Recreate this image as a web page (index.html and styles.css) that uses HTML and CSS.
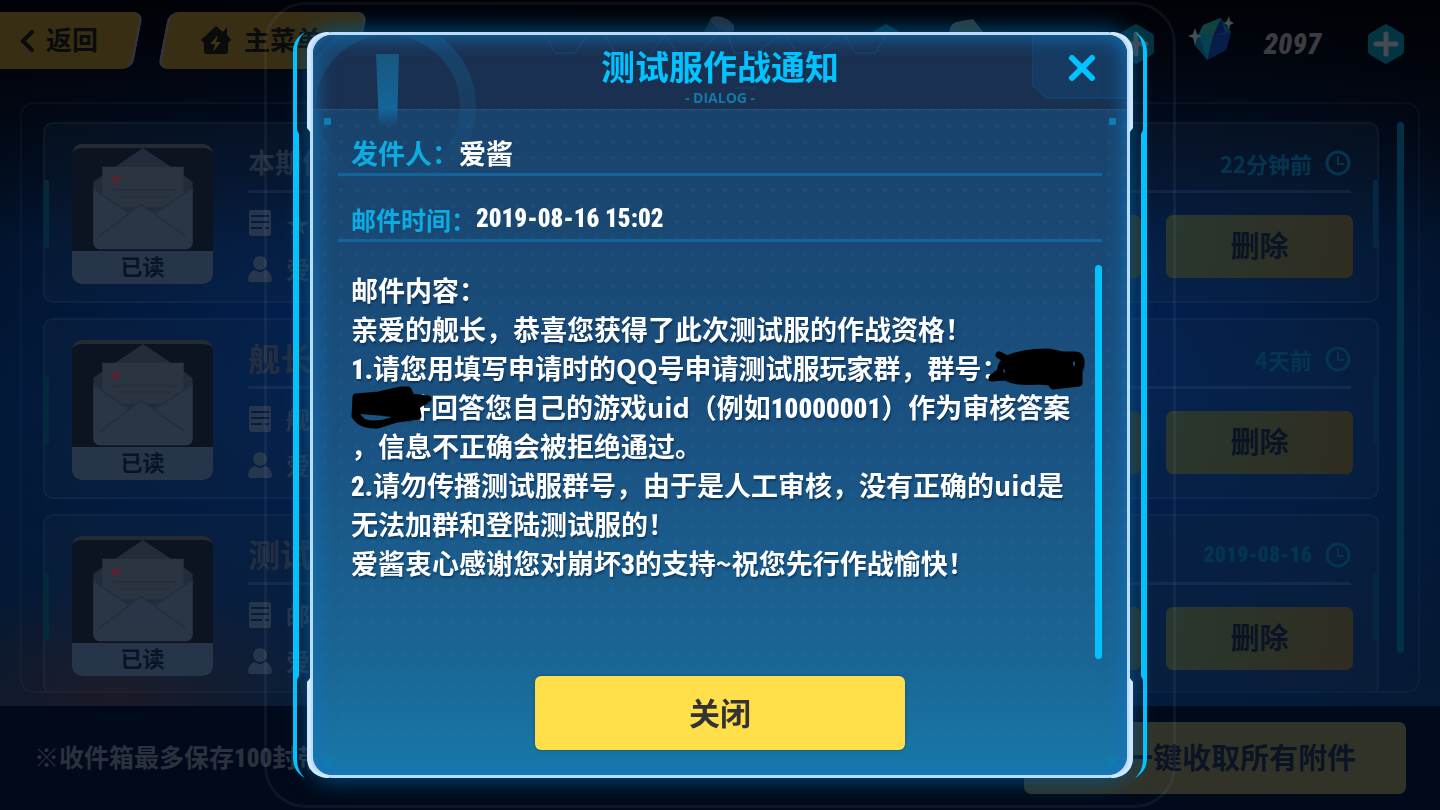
FILE: index.html
```html
<!DOCTYPE html>
<html lang="zh-CN">
<head>
<meta charset="utf-8">
<title>测试服作战通知</title>
<link rel="stylesheet" href="styles.css">
</head>
<body>
<svg class="defs" aria-hidden="true">
  <symbol id="plus-hex" viewBox="0 0 38 42">
    <path d="M19 1 Q20 1 36 11 Q37 12 37 14 V28 Q37 30 36 31 Q20 41 19 41 Q18 41 2 31 Q1 30 1 28 V14 Q1 12 2 11 Q18 1 19 1Z" fill="#043341"/>
    <path d="M19 11V31M9 21H29" stroke="#454b52" stroke-width="5" stroke-linecap="round"/>
  </symbol>
  <symbol id="envelope" viewBox="0 0 100 104">
    <path d="M0 34 L10 27 L50 0 L90 27 L100 34 V95 Q100 102 93 102 H7 Q0 102 0 95Z" fill="#222c3a"/>
    <path d="M9 19 H91 V60 H9Z" fill="#2b3441"/>
    <path d="M0 40 L36 65 L48 57 L61 65 L100 40 V95 Q100 102 93 102 H7 Q0 102 0 95Z" fill="#2a3646"/>
    <path d="M0 41 L36 66 M100 41 L61 66 M6 89 L36 66 L48 57 L61 66 L93 89" fill="none" stroke="#222e41" stroke-width="1.5"/>
    <path d="M18 42H84M26 49H78" stroke="#27303e" stroke-width="2"/>
    <path d="M23 37 L18 32 Q17 28 20 28 Q22 28 23 30 Q24 28 26 28 Q29 29 28 32Z" fill="#56242f"/>
  </symbol>
  <symbol id="doc" viewBox="0 0 24 28">
    <rect x="1" y="1" width="22" height="26" rx="2" fill="#26364d"/>
    <path d="M3 7H21M3 13H21M3 19H14M17 19H21" stroke="#071b3b" stroke-width="2"/>
  </symbol>
  <symbol id="person" viewBox="0 0 24 28">
    <circle cx="12" cy="8" r="7" fill="#26364d"/>
    <path d="M0 24 Q1 16 7 15 Q12 19 17 15 Q23 16 24 24 Q24 27 22 27 H2 Q0 27 0 24Z" fill="#26364d"/>
  </symbol>
  <symbol id="clock" viewBox="0 0 26 26">
    <circle cx="13" cy="13" r="11" fill="none" stroke="#043550" stroke-width="3"/>
    <path d="M13 6V14H19" fill="none" stroke="#043550" stroke-width="2"/>
  </symbol>
  <symbol id="corner" viewBox="0 0 40 104">
    <path d="M39 0 C26 0 17 8 17 20 V96 L21 101 V22 C21 10 27 3 39 3Z" fill="#cfe8ff"/>
    <path d="M15 0 C8 4 3 10 3 20 V104 H9 V102 L7 98 V20 C7 12 9 6 15 0Z" fill="#00c3ff"/>
  </symbol>
</svg>

<div class="screen">
  <header class="topbar">
    <nav class="nav">
      <button class="tab tab-back" type="button">
        <svg width="14" height="22" viewBox="0 0 14 22"><path d="M12 2 L3 11 L12 20" fill="none" stroke="#0a0b0d" stroke-width="4" stroke-linecap="round"/></svg>
        <span>返回</span>
      </button>
      <button class="tab tab-home" type="button">
        <svg width="30" height="29" viewBox="0 0 30 29"><path d="M15 0 L22 6 L26 1 V9 L30 14 L27 17 V25 Q27 28 24 28 H6 Q3 28 3 25 V17 L0 14Z" fill="#0a0b0d"/><path d="M17 9 L9 18 H14 L12 26 L20 16 H15Z" fill="#3c3315"/></svg>
        <span>主菜单</span>
      </button>
    </nav>
    <div class="resources">
      <div class="resource">
        <svg width="46" height="46" viewBox="0 0 46 46"><path d="M23 2 L43 13 L30 38 L10 28Z" fill="#17202f"/><ellipse cx="35" cy="8" rx="13" ry="6" transform="rotate(25 35 8)" fill="#252c38"/></svg>
        <span class="amount"></span>
        <svg class="hex"><use href="#plus-hex"/></svg>
      </div>
      <div class="resource">
        <svg width="46" height="46" viewBox="0 0 46 46"><path d="M12 12 Q13 8 18 6 L35 3 L46 17 L30 36 L8 27Z" fill="#2e3a3c"/><path d="M16 13 L33 7 L40 17 L26 30 L14 23Z" fill="#343b26"/></svg>
        <span class="amount"></span>
        <svg class="hex"><use href="#plus-hex"/></svg>
      </div>
      <div class="resource">
        <svg width="46" height="46" viewBox="0 0 46 46"><path d="M15 9 L33 2 L43 16 L38 34 L19 44 L6 28Z" fill="#063248"/><path d="M33 2 L25 20 L37 16Z" fill="#0b1644"/><path d="M15 9 L33 2 L25 20 L11 18Z" fill="#10433f"/><path d="M25 20 L43 16 L38 34 L19 44Z" fill="#071e4b"/><path d="M11 18 L25 20 L19 44Z" fill="#064052"/><path d="M7 12 L9 18 L14 20 L9 22 L7 29 L5 22 L0 20 L5 18Z M41 0 L42 5 L46 7 L42 9 L41 14 L39 9 L36 7 L39 5Z" fill="#424f54"/></svg>
        <span class="amount">2097</span>
        <svg class="hex"><use href="#plus-hex"/></svg>
      </div>
    </div>
  </header>

  <main class="inbox">
    <div class="mails">
      <article class="mail">
        <div class="thumb"><svg class="envelope"><use href="#envelope"/></svg><span class="read">已读</span></div>
        <div class="info">
          <div class="info-head"><h2 class="subject">本期作</h2><time class="ago">22分钟前<svg class="clock"><use href="#clock"/></svg></time></div>
          <div class="info-main">
            <div class="meta"><p><svg class="mini"><use href="#doc"/></svg>★</p><p><svg class="mini"><use href="#person"/></svg>爱</p></div>
            <button class="btn-dim" type="button" aria-label="查看"></button>
            <button class="btn-dim" type="button">删除</button>
          </div>
        </div>
      </article>
      <article class="mail">
        <div class="thumb"><svg class="envelope"><use href="#envelope"/></svg><span class="read">已读</span></div>
        <div class="info">
          <div class="info-head"><h2 class="subject subject-large">舰长</h2><time class="ago">4天前<svg class="clock"><use href="#clock"/></svg></time></div>
          <div class="info-main">
            <div class="meta"><p><svg class="mini"><use href="#doc"/></svg>舰</p><p><svg class="mini"><use href="#person"/></svg>爱</p></div>
            <button class="btn-dim" type="button" aria-label="查看"></button>
            <button class="btn-dim" type="button">删除</button>
          </div>
        </div>
      </article>
      <article class="mail">
        <div class="thumb"><svg class="envelope"><use href="#envelope"/></svg><span class="read">已读</span></div>
        <div class="info">
          <div class="info-head"><h2 class="subject subject-large">测试</h2><time class="ago"><span class="num-date">2019-08-16</span><svg class="clock"><use href="#clock"/></svg></time></div>
          <div class="info-main">
            <div class="meta"><p><svg class="mini"><use href="#doc"/></svg>邮</p><p><svg class="mini"><use href="#person"/></svg>爱</p></div>
            <button class="btn-dim" type="button" aria-label="查看"></button>
            <button class="btn-dim" type="button">删除</button>
          </div>
        </div>
      </article>
    </div>
    <div class="track"></div>
  </main>

  <footer class="footer">
    <p>※收件箱最多保存<span class="num">100</span>封带</p>
    <button class="btn-dim btn-all" type="button">
      <svg width="40" height="40" viewBox="0 0 40 40"><circle cx="20" cy="20" r="20" fill="#0b1424"/></svg>一键收取所有附件
    </button>
  </footer>
</div>

<div class="overlay">
  <div class="shell">
    <section class="dialog" role="dialog" aria-labelledby="dialog-title">
      <header class="dialog-head">
        <svg class="alert-mark" viewBox="0 0 180 180" aria-hidden="true">
          <defs>
            <linearGradient id="fade" x1="0" y1="0" x2="0" y2="1"><stop offset="0" stop-color="#12649b" stop-opacity=".4"/><stop offset="1" stop-color="#1a6c9c" stop-opacity=".03"/></linearGradient>
            <linearGradient id="bar" x1="0" y1="0" x2="0" y2="1"><stop offset="0" stop-color="#17587f"/><stop offset=".75" stop-color="#14659a"/><stop offset="1" stop-color="#14659a" stop-opacity="0"/></linearGradient>
          </defs>
          <circle cx="75" cy="72" r="80" fill="none" stroke="url(#fade)" stroke-width="16"/>
          <path d="M63 19 H86 L84 92 H66Z" fill="url(#bar)"/>
        </svg>
        <svg class="hexes" viewBox="0 0 400 56" aria-hidden="true"><path d="M5 0 L15 18 H35 L47 0 M65 0 L75 18 M125 0 L137 18 H157 L177 0 M125 0 L97 36 M187 0 L195 18 H216 L240 0 M216 18 L225 36 M245 0 L257 18 H278 L300 0 M305 0 L315 18 H335 L347 0 M195 18 L185 36 M195 53 H216" fill="none" stroke="#184379" stroke-width="1"/></svg>
        <h1 id="dialog-title">测试服作战通知</h1>
        <p class="sub">- DIALOG -</p>
        <button class="close" type="button" aria-label="关闭窗口">
          <svg class="close-bg" viewBox="0 0 95 64" preserveAspectRatio="none" aria-hidden="true"><path d="M0 0 V50 L14 63 H95 V0Z" fill="#163a61"/><path d="M0 0 V50 L14 63 H95" fill="none" stroke="#164c7d"/></svg>
          <svg class="close-x" viewBox="0 0 28 28" aria-hidden="true"><path d="M4 4 L24 24 M24 4 L4 24" stroke="#00c3ff" stroke-width="6" stroke-linecap="round"/></svg>
        </button>
      </header>
      <div class="dialog-body">
        <i class="pin pin-tl"></i><i class="pin pin-tr"></i><i class="pin pin-bl"></i><i class="pin pin-br"></i>
        <dl class="fields">
          <div class="field"><dt>发件人：</dt><dd>爱酱</dd></div>
          <div class="field field-time"><dt>邮件时间：</dt><dd class="num">2019-08-16 15:02</dd></div>
        </dl>
        <div class="message">
          <div class="text">
            <p>邮件内容：</p>
            <p>亲爱的舰长，恭喜您获得了此次测试服的作战资格！</p>
            <p><span class="num">1.</span>请您用填写申请时的QQ号申请测试服玩家群，群号：<span class="redacted redacted-end"><svg viewBox="0 0 100 44" aria-hidden="true"><path d="M11 8 L19 12 Q35 5 60 5 L75 8 L87 8 Q94 8 93 18 L91 25 V36 L65 39 L62 35 L50 34 Q26 36 18 30 L4 31 L13 24 Q12 17 19 12Z" fill="#000" stroke="#000" stroke-width="7" stroke-linejoin="round"/><path d="M87 14 V19 Q84 19 85 15Z M15 22 Q19 22 16 27Z" fill="#194a78"/></svg></span></p>
            <p><span class="redacted redacted-start"><svg viewBox="0 0 84 46" aria-hidden="true"><path d="M5 11 L28 9 L50 4 H57 L60 11 L77 13 L65 20 L67 30 L46 33 L27 39 Q10 40 4 30Z" fill="#000" stroke="#000" stroke-width="7" stroke-linejoin="round"/><path d="M9 28 Q24 29 41 31 Q24 37 14 33Z" fill="#1a5282"/></svg></span>并回答您自己的游戏uid（例如<span class="num">10000001</span>）作为审核答案</p>
            <p>，信息不正确会被拒绝通过。</p>
            <p><span class="num">2.</span>请勿传播测试服群号，由于是人工审核，没有正确的uid是</p>
            <p>无法加群和登陆测试服的！</p>
            <p>爱酱衷心感谢您对崩坏<span class="num">3</span>的支持~祝您先行作战愉快！</p>
          </div>
          <div class="scrollbar"></div>
        </div>
        <button class="confirm" type="button">关闭</button>
      </div>
    </section>
    <svg class="corner"><use href="#corner"/></svg>
    <svg class="corner corner-tr"><use href="#corner"/></svg>
    <svg class="corner corner-bl"><use href="#corner"/></svg>
    <svg class="corner corner-br"><use href="#corner"/></svg>
    <i class="rail"></i><i class="rail rail-right"></i>
    <i class="halo"></i>
  </div>
</div>
</body>
</html>
```
FILE: styles.css
```css
* { box-sizing: border-box; margin: 0; padding: 0; }
body {
  font-family: "Noto Sans CJK SC", "Noto Sans", sans-serif;
  font-weight: 700;
  background: #010a1c;
  overflow: hidden;
}
button { font: inherit; border: 0; background: none; cursor: pointer; }
.defs { display: none; }
.num, .num-date, .amount {
  font-family: "Roboto Condensed", "Liberation Sans Narrow", "Open Sans Condensed", Roboto, sans-serif;
  font-weight: 900;
}

.screen {
  display: flex;
  flex-direction: column;
  height: 100vh;
  background:
    linear-gradient(rgba(1, 2, 7, .95), rgba(1, 2, 7, .5) 14%, transparent 30%),
    radial-gradient(ellipse 16% 14% at 8% 86%, #1c1a26, transparent),
    radial-gradient(ellipse 34% 50% at 24% 44%, #012053, transparent),
    radial-gradient(ellipse 30% 50% at 79% 46%, #012154, transparent),
    linear-gradient(#020712, #04162d 50%, #051b38);
}

.topbar {
  display: flex;
  justify-content: space-between;
  align-items: flex-start;
  padding: 12px 35px 0 0;
  height: 102px;
}
.nav { display: flex; gap: 22px; }
.tab {
  position: relative;
  isolation: isolate;
  display: flex;
  align-items: center;
  height: 57px;
  color: #0a0b0d;
  font-size: 26px;
}
.tab span { padding-bottom: 4px; }
.tab::before {
  content: "";
  position: absolute;
  z-index: -1;
  inset: 0;
  background: #382e13;
  border-radius: 10px;
  transform: skewX(-11deg);
}
.tab-back { width: 138px; padding-left: 20px; gap: 12px; }
.tab-back::before { left: -20px; border-right: 3px solid #33343a; }
.tab-home { width: 202px; padding-left: 41px; gap: 13px; }
.tab-home::before { left: 3px; border-left: 3px solid #33343a; border-right: 3px solid #33343a; }
.resources { display: flex; gap: 33px; }
.resource { display: flex; align-items: center; width: 217px; height: 57px; padding-top: 7px; }
.resource > svg:first-child { margin-bottom: 10px; }
.amount { flex: 1; padding-right: 16px; text-align: center; font-size: 29px; font-style: italic; color: #3b3b41; }
.hex { width: 38px; height: 42px; }

.inbox {
  flex: 1;
  min-height: 0;
  display: flex;
  justify-content: space-between;
  gap: 18px;
  margin: 0 20px 13px;
  padding: 18px 14px 0 21px;
  border: 2px solid rgba(120, 150, 190, .06);
  border-radius: 14px;
  overflow: hidden;
}
.mails { flex: 1; display: flex; flex-direction: column; gap: 15px; }
.mail {
  position: relative;
  flex: none;
  display: flex;
  gap: 35px;
  height: 181px;
  padding: 20px 26px 0 27px;
  border: 2px solid rgba(110, 140, 170, .07);
  border-radius: 10px;
  background: rgba(30, 50, 70, .16);
}
.mail::before, .mail::after {
  content: "";
  position: absolute;
  top: 56px;
  left: -1px;
  width: 5px;
  height: 68px;
  background: #032a3b;
  border-radius: 2px;
}
.mail::after { left: auto; right: -1px; background: #042744; }
.thumb {
  display: flex;
  flex-direction: column;
  justify-content: flex-end;
  align-items: center;
  width: 141px;
  height: 140px;
  border-radius: 10px;
  border-top: 4px solid #242b35;
  background: #0b1420;
  overflow: hidden;
}
.envelope { width: 100px; height: 104px; }
.read {
  align-self: stretch;
  height: 33px;
  line-height: 29px;
  text-align: center;
  font-size: 22px;
  color: #071426;
  background: #27354a;
}
.info { flex: 1; }
.info-head {
  display: flex;
  justify-content: space-between;
  align-items: center;
  height: 49px;
  padding-bottom: 8px;
  border-bottom: 3px solid rgba(90, 120, 160, .14);
}
.subject { font-size: 27px; line-height: 38px; padding-bottom: 3px; color: #232f40; }
.subject-large { font-size: 32px; padding-bottom: 5px; }
.ago { display: flex; align-items: center; gap: 13px; font-size: 22px; line-height: 28px; color: #043550; }
.clock { width: 26px; height: 26px; }
.info-main { display: flex; gap: 25px; margin-right: -2px; }
.meta { flex: 1; padding-top: 7px; font-size: 24px; color: #26364d; }
.meta p { display: flex; align-items: center; gap: 14px; height: 46px; line-height: 30px; }
.mini { width: 24px; height: 28px; }
.btn-dim {
  width: 187px;
  height: 63px;
  margin-top: 22px;
  padding-bottom: 5px;
  border-radius: 7px;
  font-size: 29px;
  color: #0b1424;
  background: linear-gradient(100deg, #29382f, #302c20);
}
.track { width: 7px; height: 531px; border-radius: 4px; background: #043047; }

.footer {
  display: flex;
  justify-content: space-between;
  align-items: center;
  height: 104px;
  padding: 0 34px;
  background: #010a1a;
  color: #2a323f;
  font-size: 25px;
}
.footer p { padding-bottom: 4px; }
.btn-all {
  display: flex;
  align-items: center;
  justify-content: center;
  gap: 10px;
  width: 382px;
  height: 72px;
  margin: 0;
  background: #313329;
}

.overlay {
  position: fixed;
  inset: 0;
  display: flex;
  align-items: center;
  justify-content: center;
}
.shell { position: relative; width: 820px; height: 92vh; }
.halo {
  position: absolute;
  inset: -30px -46px;
  border: 3px solid rgba(170, 190, 220, .07);
  border-radius: 42px;
  pointer-events: none;
}
.dialog {
  display: flex;
  flex-direction: column;
  height: 100%;
  border: 3px solid #bcdcff;
  border-radius: 22px;
  overflow: hidden;
  background:
    linear-gradient(#1a3f67, #194670 22%, #1a5282 55%, #1a6594 84%, #1879a9);
  box-shadow: 0 0 24px #005c94;
}
.dialog::after {
  content: "";
  position: absolute;
  inset: 3px;
  border-radius: 19px;
  box-shadow: inset 0 0 22px #1474bb;
  pointer-events: none;
}
.dialog-head {
  position: relative;
  height: 74px;
  padding-top: 6px;
  text-align: center;
  background: #1a3050;
}
.dialog-head h1 { position: relative; font-size: 34px; line-height: 50px; color: #00c3ff; }
.sub {
  position: relative;
  font-family: "Open Sans", "Noto Sans", sans-serif;
  font-size: 14px;
  line-height: 14px;
  color: #127ba8;
}
.alert-mark { position: absolute; z-index: 1; left: 0; top: 0; width: 180px; height: 180px; }
.hexes { position: absolute; left: 50%; top: 0; width: 400px; height: 56px; margin-left: -180px; }
.close { position: absolute; right: 0; top: 0; width: 95px; height: 64px; }
.close-bg { position: absolute; inset: 0; width: 100%; height: 100%; }
.close-x { position: absolute; left: 36px; top: 19px; width: 28px; height: 28px; }
.dialog-body {
  position: relative;
  flex: 1;
  min-height: 0;
  display: flex;
  flex-direction: column;
  align-items: center;
  padding: 0 25px 25px;
  border-top: 1px solid #24507a;
  background: radial-gradient(circle, rgba(30, 125, 170, .16) 1px, transparent 3px) 4px 8px / 16px 16px;
}
.pin { position: absolute; width: 7px; height: 7px; border-radius: 1px; background: #0e7fb2; }
.pin-tl { left: 11px; top: 8px; }
.pin-tr { right: 11px; top: 8px; }
.pin-bl { left: 11px; bottom: 10px; }
.pin-br { right: 11px; bottom: 10px; }
.fields, .message { position: relative; z-index: 2; width: 100%; }
.field {
  display: flex;
  align-items: flex-end;
  height: 66px;
  padding: 0 0 2px 13px;
  border-bottom: 3px solid #14639a;
  font-size: 27px;
  line-height: 36px;
}
.field dt { color: #0cabe2; }
.field dd { color: #fff; }
.field-time { font-size: 25px; }
.message {
  flex: 1;
  min-height: 0;
  display: flex;
  justify-content: space-between;
  margin: 23px 0 17px;
}
.text {
  padding: 5px 0 0 13px;
  font-size: 27px;
  line-height: 39px;
  color: #fff;
  white-space: nowrap;
  text-shadow: 1px 2px 2px rgba(5, 35, 70, .6);
}
.text p { height: 39px; }
.scrollbar { width: 7px; border-radius: 4px; background: #00c3ff; }
.redacted { position: relative; display: inline-block; width: 53px; height: 20px; }
.redacted svg { position: absolute; left: 0; top: -12px; width: 84px; height: 46px; }
.redacted-end { width: 80px; }
.redacted-end svg { left: -21px; width: 100px; height: 44px; }
.confirm {
  width: 370px;
  height: 74px;
  padding-bottom: 3px;
  border-radius: 6px;
  background: #ffe04a;
  color: #333;
  font-size: 31px;
  box-shadow: 0 0 3px #12486d;
}
.corner { position: absolute; left: -20px; top: 0; width: 40px; height: 104px; }
.corner-tr { left: auto; right: -20px; transform: scaleX(-1); }
.corner-bl { top: auto; bottom: 0; transform: scaleY(-1); }
.corner-br { left: auto; right: -20px; top: auto; bottom: 0; transform: scale(-1); }
.rail { position: absolute; left: -17px; top: 103px; bottom: 103px; width: 6px; background: #00c3ff; }
.rail-right { left: auto; right: -17px; }
```
